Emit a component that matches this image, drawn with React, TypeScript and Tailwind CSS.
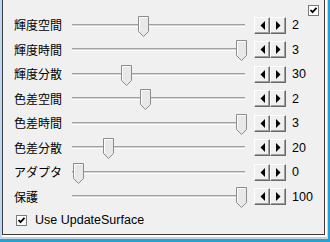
import React from "react";

interface Row {
	label: string;
	value: number;
	pos: number;
}

const rows: Row[] = [
	{ label: "輝度空間", value: 2, pos: 66 },
	{ label: "輝度時間", value: 3, pos: 164 },
	{ label: "輝度分散", value: 30, pos: 49 },
	{ label: "色差空間", value: 2, pos: 68 },
	{ label: "色差時間", value: 3, pos: 164 },
	{ label: "色差分散", value: 20, pos: 31 },
	{ label: "アダプタ", value: 0, pos: 1 },
	{ label: "保護", value: 100, pos: 164 },
];

function Check() {
	return (
		<div className="w-[11px] h-[11px] border border-[#7a7a7a] bg-white flex items-center justify-center">
			<svg width="9" height="9" viewBox="0 0 9 9">
				<path d="M1.5 4 L3.5 6.2 L7.5 1.8" fill="none" stroke="#000" strokeWidth="1.8" />
			</svg>
		</div>
	);
}

function Thumb() {
	return (
		<svg width="11" height="21" viewBox="0 0 11 21">
			<path d="M0.5 0.5 H10.5 V15.5 L5.5 20.5 L0.5 15.5 Z" fill="#e8e8e8" stroke="#8c8c8c" />
			<path d="M1.5 15 V1.5 H9.5" fill="none" stroke="#ffffff" />
		</svg>
	);
}

function SpinButton({ dir }: { dir: "l" | "r" }) {
	return (
		<div className="w-[16px] h-[17px] bg-[#f0f0f0] border border-t-white border-l-white border-r-[#696969] border-b-[#696969] shadow-[inset_-1px_-1px_0_#a0a0a0] flex items-center justify-center">
			<svg width="5" height="9" viewBox="0 0 5 9">
				{dir === "l" ? <path d="M5 0 V9 L0.5 4.5 Z" fill="#000" /> : <path d="M0 0 V9 L4.5 4.5 Z" fill="#000" />}
			</svg>
		</div>
	);
}

function SliderRow({ row }: { row: Row }) {
	return (
		<div className="h-[24.5px] flex items-center">
			<div className="w-[58px] text-[12px] leading-none text-black">{row.label}</div>
			<div className="relative w-[173px] h-[3px] border-t border-[#a0a0a0] bg-[#d4d4d4] border-b border-b-white">
				<div className="absolute top-[-9px]" style={{ left: row.pos }}>
					<Thumb />
				</div>
			</div>
			<div className="ml-[9px] flex">
				<SpinButton dir="l" />
				<SpinButton dir="r" />
			</div>
			<div className="ml-[6px] text-[12.5px] leading-none text-black" style={{ fontFamily: '"Liberation Sans", sans-serif' }}>
				{row.value}
			</div>
		</div>
	);
}

export default function App() {
	return (
		<div
			className="w-[330px] h-[242px] bg-[#bfd6ed] border-r-2 border-b-[3px] border-[#1ba6d9] pl-[2px] pr-px pb-[2px] flex"
			style={{ fontFamily: '"Noto Sans CJK JP", "Liberation Sans", sans-serif' }}
		>
			<div className="flex-1 flex border-r-2 border-b-2 border-white">
				<div className="flex-1 bg-[#f0f0f0] border-l border-r border-b border-[#3c3c3c] flex flex-col">
					<div className="pt-[5px] pr-[5px] flex justify-end h-[16px]">
						<Check />
					</div>
					<div className="pl-[11px] flex flex-col -mt-[3px]">
						{rows.map((r) => (
							<SliderRow key={r.label} row={r} />
						))}
					</div>
					<div className="pl-[13px] mt-[5px] flex items-center gap-[8px]">
						<Check />
						<span className="text-[12.5px] leading-none text-black" style={{ fontFamily: '"Liberation Sans", sans-serif' }}>
							Use UpdateSurface
						</span>
					</div>
				</div>
			</div>
		</div>
	);
}
